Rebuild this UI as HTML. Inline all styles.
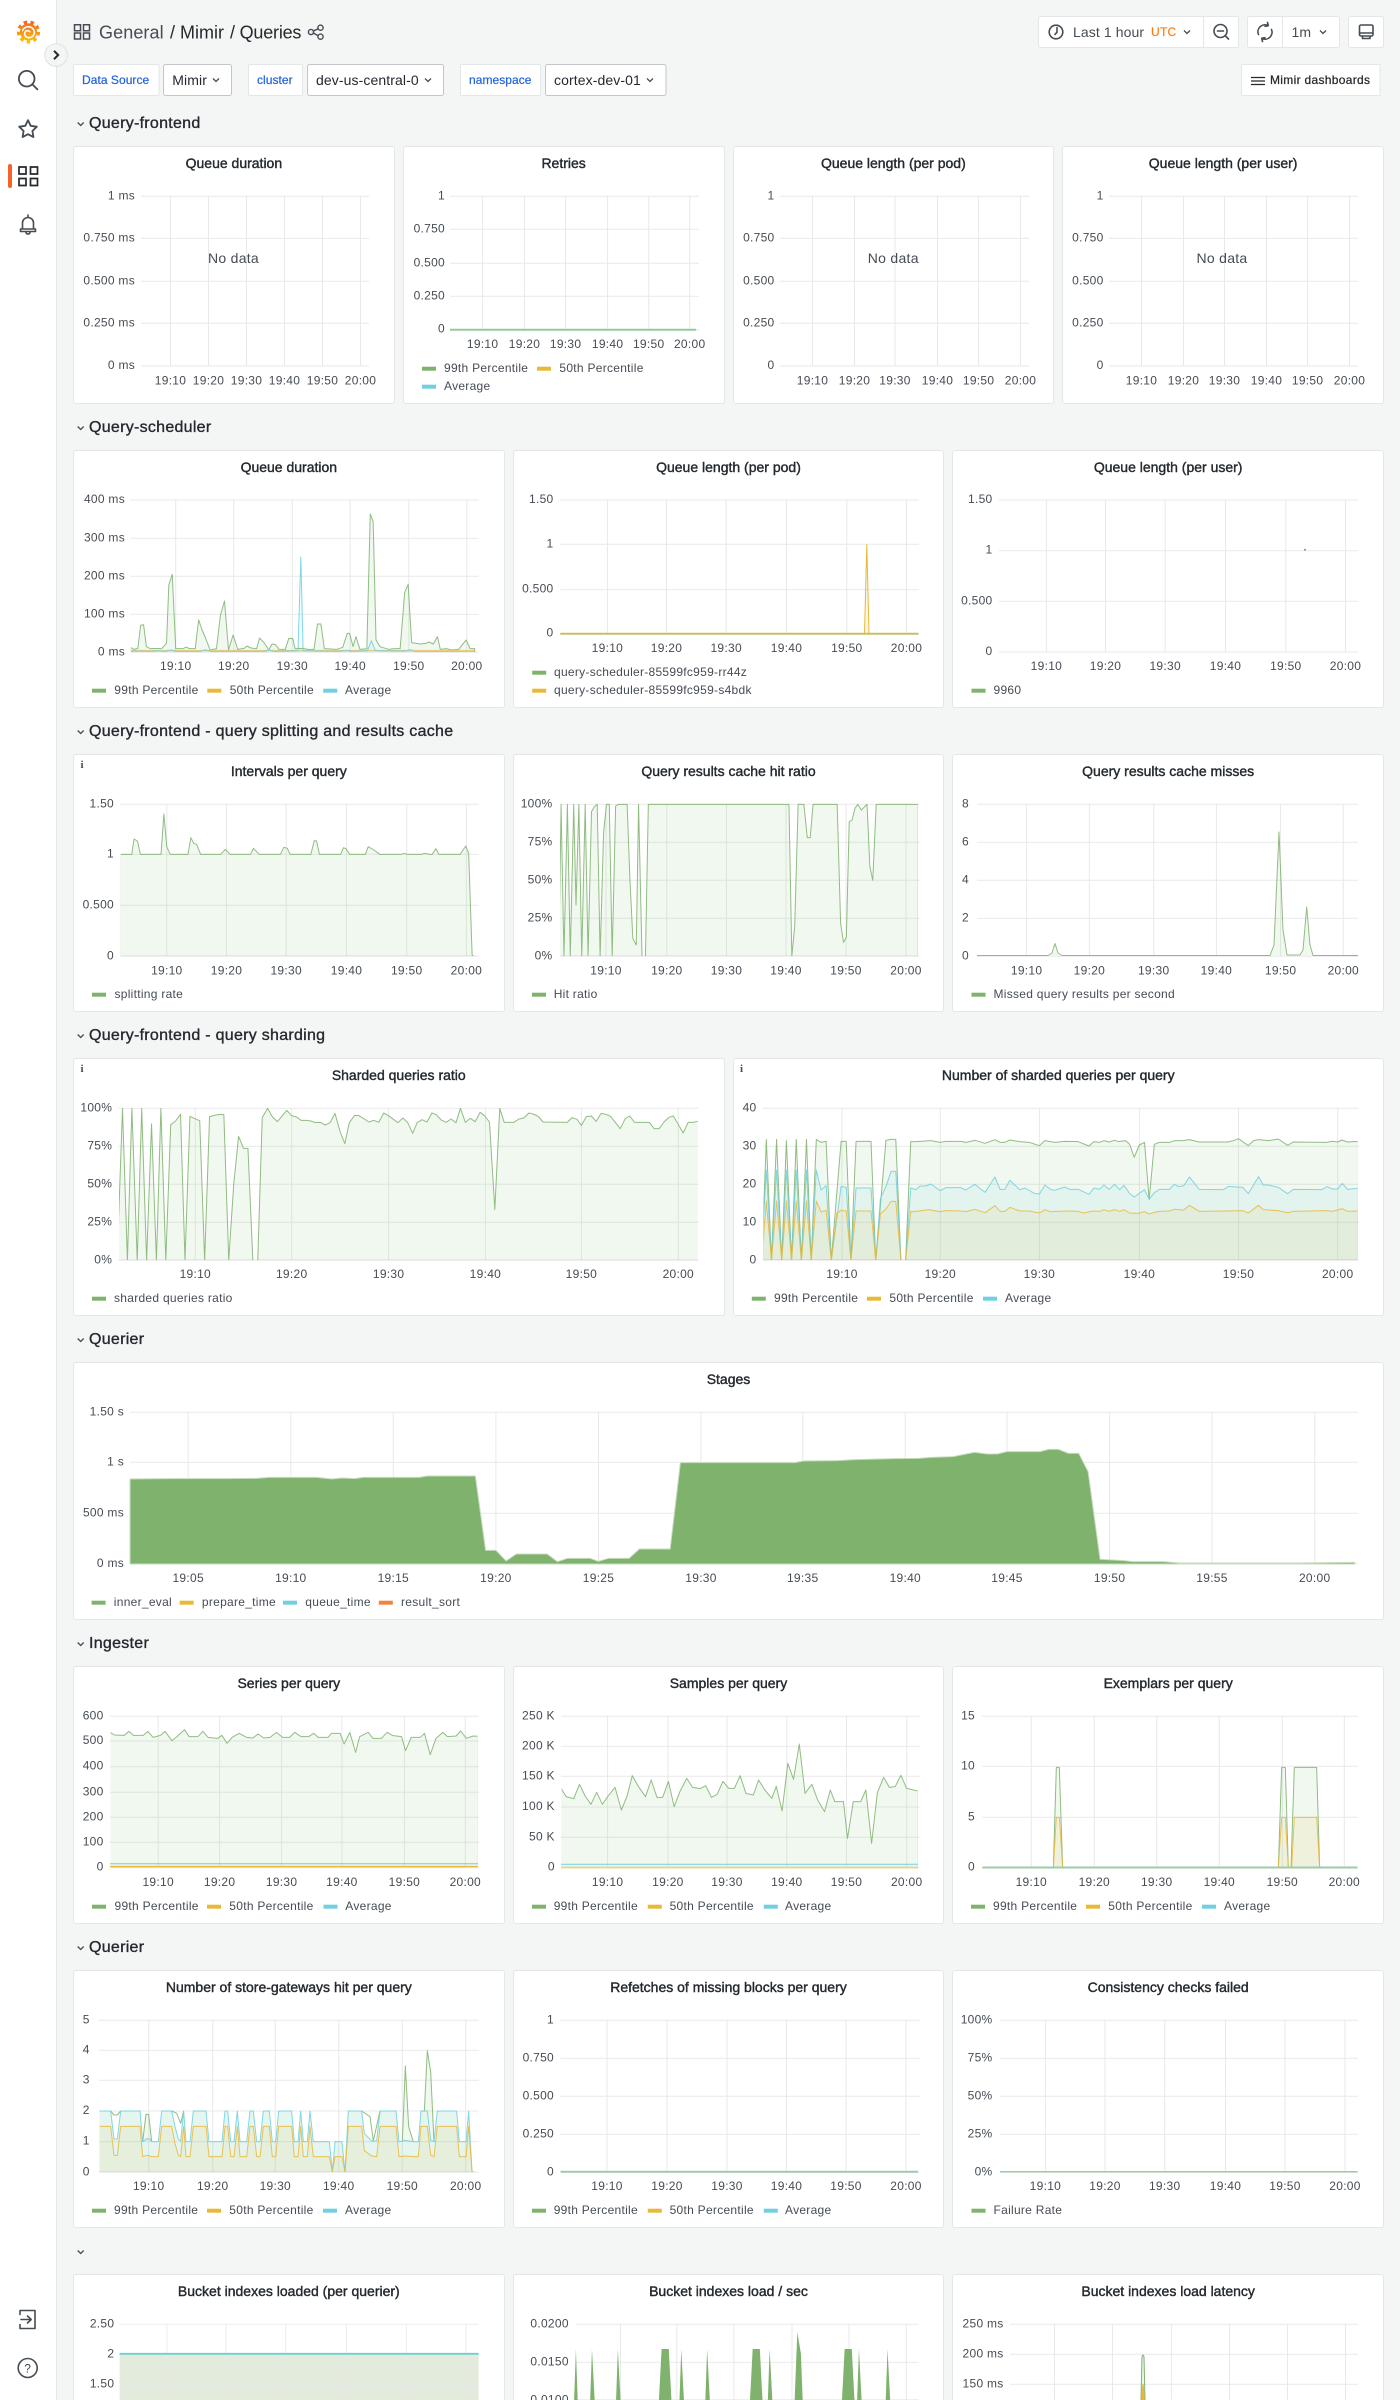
<!DOCTYPE html>
<html lang="en"><head><meta charset="utf-8"><title>Mimir / Queries</title>
<style>
html,body{margin:0;padding:0;background:#f4f5f5;width:1400px;height:2400px;overflow:hidden}
#root{position:absolute;left:0;top:0;width:1400px;height:2400px;overflow:hidden;font-family:"Liberation Sans",sans-serif;color:#24292e}
#side{position:absolute;left:0;top:0;box-sizing:border-box;width:57px;height:2400px;background:#fff;border-right:1px solid #e4e7e7}
.p{position:absolute;box-sizing:border-box;height:258px;background:#fff;border:1px solid #e4e7e7;border-radius:3px}
.p.cut{height:126px;border-bottom:0;border-radius:3px 3px 0 0}
.p h3{margin:0;font:400 14px/32px "Liberation Sans",sans-serif;-webkit-text-stroke:.4px #24292e;color:#24292e;text-align:center}
.w4{width:321.75px}.w3{width:431.67px}.w2{width:651.5px}.w1{width:1311px}
svg#o{position:absolute;left:0;top:0;width:1400px;height:2400px;display:block}
svg text{font-family:"Liberation Sans",sans-serif;font-size:12px;fill:#464c54;letter-spacing:.28px}
.ya text{text-anchor:end}.xa text{text-anchor:middle}
.lg text{fill:#464c54}
.g{stroke:#e8e9e9;stroke-width:1;fill:none}
.sec{font-size:16px!important;fill:#24292e!important;stroke:#24292e;stroke-width:.35px;letter-spacing:.28px!important}
.chev{fill:none;stroke:#464c54;stroke-width:1.3}
.gf,.yf,.cf,.gl,.yl,.cl{vector-effect:non-scaling-stroke;stroke-width:1;stroke-linejoin:round;stroke-opacity:.85}
.gf{fill:#73bf69;fill-opacity:.1;stroke:#7eb26d}
.yf{fill:#eab839;fill-opacity:.1;stroke:#eab839}
.cf{fill:#6ed0e0;fill-opacity:.1;stroke:#6ed0e0}
.gl{fill:none;stroke:#7eb26d}.yl{fill:none;stroke:#eab839}.cl{fill:none;stroke:#6ed0e0}
.ic{fill:none;stroke:#464c54;stroke-width:1.6;stroke-linecap:round;stroke-linejoin:round}
.bx{fill:#fff;stroke:#e4e7e7}.dd{fill:#fff;stroke:#c2c6ca}
.v{font-size:14px!important;fill:#24292e!important;letter-spacing:.1px!important}
.bl{fill:#1f62e0!important;stroke:#1f62e0;stroke-width:.2px;letter-spacing:.05px!important}
.nd{font-size:14px!important;text-anchor:middle;fill:#464c54}
.inf{font-family:"Liberation Serif",serif!important;font-weight:700;font-size:11px!important}
</style></head><body>
<div id="root">
<div id="side"></div>
<div class="p w4" style="left:73px;top:146px"><h3>Queue duration</h3></div>
<div class="p w4" style="left:402.75px;top:146px"><h3>Retries</h3></div>
<div class="p w4" style="left:732.5px;top:146px"><h3>Queue length (per pod)</h3></div>
<div class="p w4" style="left:1062.25px;top:146px"><h3>Queue length (per user)</h3></div>
<div class="p w3" style="left:73px;top:450px"><h3>Queue duration</h3></div>
<div class="p w3" style="left:512.67px;top:450px"><h3>Queue length (per pod)</h3></div>
<div class="p w3" style="left:952.33px;top:450px"><h3>Queue length (per user)</h3></div>
<div class="p w3" style="left:73px;top:754px"><h3>Intervals per query</h3></div>
<div class="p w3" style="left:512.67px;top:754px"><h3>Query results cache hit ratio</h3></div>
<div class="p w3" style="left:952.33px;top:754px"><h3>Query results cache misses</h3></div>
<div class="p w2" style="left:73px;top:1058px"><h3>Sharded queries ratio</h3></div>
<div class="p w2" style="left:732.5px;top:1058px"><h3>Number of sharded queries per query</h3></div>
<div class="p w1" style="left:73px;top:1362px"><h3>Stages</h3></div>
<div class="p w3" style="left:73px;top:1666px"><h3>Series per query</h3></div>
<div class="p w3" style="left:512.67px;top:1666px"><h3>Samples per query</h3></div>
<div class="p w3" style="left:952.33px;top:1666px"><h3>Exemplars per query</h3></div>
<div class="p w3" style="left:73px;top:1970px"><h3>Number of store-gateways hit per query</h3></div>
<div class="p w3" style="left:512.67px;top:1970px"><h3>Refetches of missing blocks per query</h3></div>
<div class="p w3" style="left:952.33px;top:1970px"><h3>Consistency checks failed</h3></div>
<div class="p w3 cut" style="left:73px;top:2274px"><h3>Bucket indexes loaded (per querier)</h3></div>
<div class="p w3 cut" style="left:512.67px;top:2274px"><h3>Bucket indexes load / sec</h3></div>
<div class="p w3 cut" style="left:952.33px;top:2274px"><h3>Bucket indexes load latency</h3></div>

<svg id="o" viewBox="0 0 1400 2400" xmlns="http://www.w3.org/2000/svg">
<defs>
<linearGradient id="lg" gradientUnits="userSpaceOnUse" x1="28" y1="19" x2="28" y2="44"><stop offset="0" stop-color="#f05a28"/><stop offset="1" stop-color="#fbca0a"/></linearGradient>
<clipPath id="c1"><rect x="130.9" y="480" width="347.5" height="171.9"/></clipPath>
<clipPath id="c2"><rect x="120.8" y="790" width="358" height="166"/></clipPath>
<clipPath id="c3"><rect x="560" y="790" width="357.8" height="166"/></clipPath>
<clipPath id="c5"><rect x="119" y="1100" width="578.5" height="160"/></clipPath>
<clipPath id="c6"><rect x="763.4" y="1100" width="594.2" height="160"/></clipPath>
<clipPath id="c8"><rect x="110.5" y="1700" width="367" height="167.3"/></clipPath>
<clipPath id="c9"><rect x="561.7" y="1700" width="356" height="167.3"/></clipPath>
<clipPath id="c11"><rect x="99.5" y="2015" width="375" height="157"/></clipPath>
</defs>

<!-- sidebar icons -->
<circle cx="28.5" cy="32" r="9.8" fill="none" stroke="url(#lg)" stroke-width="3.6" stroke-dasharray="3.42 3.42"/>
<circle cx="28.5" cy="32" r="8.6" fill="url(#lg)"/>
<path d="M22.6 30.5a6.2 6.2 0 0 1 11.8 1.2a5.6 5.6 0 0 1-6 6a3.9 3.9 0 0 1-3.6-5a2.9 2.9 0 0 1 5-1" fill="none" stroke="#fff" stroke-width="1.6" stroke-linecap="round"/>
<circle cx="26.7" cy="78.7" r="7.8" class="ic" style="stroke-width:1.8"/><path d="M32.4 84.4L37.4 89.4" class="ic" style="stroke-width:1.8"/>
<path d="M28 120.2l2.7 5.6 6.1.9-4.4 4.3 1 6.1-5.4-2.9-5.4 2.9 1-6.1-4.4-4.3 6.1-.9z" class="ic" style="stroke-width:1.8"/>
<rect x="8" y="164" width="4" height="24" rx="2" fill="#f4632c"/>
<path d="M19 167h7v7h-7zM30.500 167h7v7h-7zM19 178.500h7v7h-7zM30.500 178.500h7v7h-7z" fill="none" stroke="#24292e" stroke-width="1.7"/>
<path d="M28 215v2M22.500 229v-6a5.500 5.500 0 0 1 11 0v6M20.500 229h15v2.500h-15zM26 232.500a2 1.500 0 0 0 4 0" class="ic"/>
<path d="M24 2310.500h11v18h-11M20 2310.500v4M20 2324.500v4M20 2310.500h4M20 2328.500h4M21 2319.500h10M27.500 2316l3.700 3.500-3.700 3.500" class="ic"/>
<circle cx="27.700" cy="2368" r="9.500" class="ic"/><text x="27.700" y="2372.500" text-anchor="middle" style="font-size:12px">?</text>
<circle cx="56" cy="55" r="11.300" fill="#f4f5f5" stroke="#dfe2e2"/>
<path d="M54 50.800l4.200 4.200-4.200 4.200" fill="none" stroke="#24292e" stroke-width="2"/>

<!-- top bar -->
<path d="M74.500 24.800h6v6h-6zM83.500 24.800h6v6h-6zM74.500 33h6v6h-6zM83.500 33h6v6h-6z" fill="none" stroke="#464c54" stroke-width="1.500"/>
<text x="99" y="38.500" style="font-size:18px;letter-spacing:.1px;fill:#464c54">General</text>
<text x="170" y="38.500" style="font-size:18px;letter-spacing:0;fill:#24292e">/ Mimir</text>
<text x="230" y="38.500" style="font-size:18px;letter-spacing:-.2px;fill:#24292e">/ Queries</text>
<circle cx="311" cy="32" r="2.600" class="ic" style="stroke-width:1.400"/><circle cx="320.500" cy="27.700" r="2.600" class="ic" style="stroke-width:1.400"/><circle cx="320.500" cy="36.700" r="2.600" class="ic" style="stroke-width:1.400"/><path d="M313.300 31l4.900-2.200M313.300 33l4.900 2.700" class="ic" style="stroke-width:1.400"/>

<rect class="bx" x="1038.500" y="16.500" width="200" height="31" rx="2"/><path d="M1203.500 17v30" stroke="#e4e7e7"/>
<circle cx="1056" cy="32" r="6.800" class="ic"/><path d="M1057 27.500v4.700l-2 2.200" class="ic"/>
<text x="1073" y="37" style="font-size:14px;letter-spacing:.1px">Last 1 hour</text>
<text x="1151" y="36" style="fill:#ff780a;stroke:#ff780a;stroke-width:.15px">UTC</text>
<path d="M1184 30.500l3 3 3-3" class="chev"/>
<circle cx="1220.500" cy="31" r="6.500" class="ic"/><path d="M1217.500 31h6M1225.500 36l3 3" class="ic"/>
<rect class="bx" x="1247.500" y="16.500" width="92" height="31" rx="2"/><path d="M1282.500 17v30" stroke="#e4e7e7"/>
<path d="M1258.500 34.500a7 7 0 0 1 9.500-9M1271.500 29.500a7 7 0 0 1-9.500 9M1267.500 22.500l.8 3.200-3.200.6M1262.500 41.500l-.8-3.200 3.200-.6" class="ic"/>
<text x="1291.500" y="37" style="font-size:14px;letter-spacing:.1px">1m</text>
<path d="M1320 30.500l3 3 3-3" class="chev"/>
<rect class="bx" x="1348.500" y="16.500" width="35" height="31" rx="2"/>
<path d="M1361 25h10.500a1.500 1.500 0 0 1 1.500 1.500v8a1.500 1.500 0 0 1-1.500 1.500h-10.500a1.500 1.500 0 0 1-1.500-1.500v-8a1.500 1.500 0 0 1 1.500-1.500zM1359.500 33h13.500M1362.500 36v2.500h7.500v-2.500" class="ic"/>

<rect class="bx" x="73.500" y="64.500" width="85.500" height="31" rx="1"/><text class="bl" x="82" y="84">Data Source</text>
<rect class="dd" x="163.500" y="64.500" width="68" height="31" rx="2"/><text class="v" x="172.300" y="85">Mimir</text><path d="M213 78.500l3 3 3-3" class="chev"/>
<rect class="bx" x="248.500" y="64.500" width="54" height="31" rx="1"/><text class="bl" x="257" y="84">cluster</text>
<rect class="dd" x="307.500" y="64.500" width="136" height="31" rx="2"/><text class="v" x="316" y="85">dev-us-central-0</text><path d="M425 78.500l3 3 3-3" class="chev"/>
<rect class="bx" x="460.500" y="64.500" width="80" height="31" rx="1"/><text class="bl" x="469" y="84">namespace</text>
<rect class="dd" x="545.500" y="64.500" width="120.500" height="31" rx="2"/><text class="v" x="554" y="85">cortex-dev-01</text><path d="M647 78.500l3 3 3-3" class="chev"/>
<rect class="bx" x="1241.500" y="64.500" width="138.500" height="31" rx="1"/>
<path d="M1251 77.500h14M1251 81h14M1251 84.500h14" stroke="#24292e" stroke-width="1.300"/>
<text x="1270" y="84" style="fill:#24292e;stroke:#24292e;stroke-width:.25px;letter-spacing:.31px">Mimir dashboards</text>

<!-- section rows -->
<path class="chev" d="M77.700 122.500l3 3 3-3M77.700 426.500l3 3 3-3M77.700 730.500l3 3 3-3M77.700 1034.500l3 3 3-3M77.700 1338.500l3 3 3-3M77.700 1642.500l3 3 3-3M77.700 1946.500l3 3 3-3M77.700 2250.500l3 3 3-3"/>
<text class="sec" x="89" y="128">Query-frontend</text>
<text class="sec" x="89" y="432">Query-scheduler</text>
<text class="sec" x="89" y="736">Query-frontend - query splitting and results cache</text>
<text class="sec" x="89" y="1040">Query-frontend - query sharding</text>
<text class="sec" x="89" y="1344">Querier</text>
<text class="sec" x="89" y="1648">Ingester</text>
<text class="sec" x="89" y="1952">Querier</text>

<text class="inf" x="80.500" y="768">i</text><text class="inf" x="80.500" y="1072">i</text><text class="inf" x="740" y="1072">i</text>

<!-- R1 P1 -->
<path class="g" d="M141 196.300H369M141 238.300H369M141 281.300H369M141 323.300H369M141 366H369M170.500 196V366M208.500 196V366M246.500 196V366M284.500 196V366M322.500 196V366M360.500 196V366"/>
<g class="ya"><text x="135" y="199.300">1 ms</text><text x="135" y="241.300">0.750 ms</text><text x="135" y="284.300">0.500 ms</text><text x="135" y="326.300">0.250 ms</text><text x="135" y="369">0 ms</text></g>
<g class="xa"><text x="170.500" y="384.300">19:10</text><text x="208.500" y="384.300">19:20</text><text x="246.500" y="384.300">19:30</text><text x="284.500" y="384.300">19:40</text><text x="322.500" y="384.300">19:50</text><text x="360.500" y="384.300">20:00</text></g>
<text class="nd" x="233.500" y="263">No data</text>
<!-- R1 P2 -->
<path class="g" d="M450 196.300H699M450 229.300H699M450 263.300H699M450 296.300H699M450 329.700H699M482.600 196V330M524.500 196V330M565.600 196V330M607.600 196V330M648.700 196V330M689.700 196V330"/>
<path d="M450 329.700H696" stroke="#96c8a0" stroke-width="2"/>
<g class="ya"><text x="445" y="199.300">1</text><text x="445" y="232.300">0.750</text><text x="445" y="266.300">0.500</text><text x="445" y="299.300">0.250</text><text x="445" y="332.700">0</text></g>
<g class="xa"><text x="482.600" y="348">19:10</text><text x="524.500" y="348">19:20</text><text x="565.600" y="348">19:30</text><text x="607.600" y="348">19:40</text><text x="648.700" y="348">19:50</text><text x="689.700" y="348">20:00</text></g>
<g class="lg"><rect x="422" y="366.700" width="14" height="4" fill="#7eb26d"/><text x="444" y="372">99th Percentile</text><rect x="537" y="366.700" width="14" height="4" fill="#eab839"/><text x="559.400" y="372">50th Percentile</text><rect x="422" y="384.700" width="14" height="4" fill="#6ed0e0"/><text x="444" y="390">Average</text></g>
<!-- R1 P3 -->
<path class="g" d="M779.500 196.300H1029M779.500 238.300H1029M779.500 281.300H1029M779.500 323.300H1029M779.500 366H1029M812.500 196V366M854.500 196V366M895 196V366M937.500 196V366M978.600 196V366M1020.500 196V366"/>
<g class="ya"><text x="774.500" y="199.300">1</text><text x="774.500" y="241.300">0.750</text><text x="774.500" y="284.300">0.500</text><text x="774.500" y="326.300">0.250</text><text x="774.500" y="369">0</text></g>
<g class="xa"><text x="812.500" y="384.300">19:10</text><text x="854.500" y="384.300">19:20</text><text x="895" y="384.300">19:30</text><text x="937.500" y="384.300">19:40</text><text x="978.600" y="384.300">19:50</text><text x="1020.500" y="384.300">20:00</text></g>
<text class="nd" x="893.300" y="263">No data</text>
<!-- R1 P4 -->
<path class="g" d="M1109 196.300H1358M1109 238.300H1358M1109 281.300H1358M1109 323.300H1358M1109 366H1358M1141.500 196V366M1183.500 196V366M1224.500 196V366M1266.500 196V366M1307.600 196V366M1349.500 196V366"/>
<g class="ya"><text x="1103.600" y="199.300">1</text><text x="1103.600" y="241.300">0.750</text><text x="1103.600" y="284.300">0.500</text><text x="1103.600" y="326.300">0.250</text><text x="1103.600" y="369">0</text></g>
<g class="xa"><text x="1141.500" y="384.300">19:10</text><text x="1183.500" y="384.300">19:20</text><text x="1224.500" y="384.300">19:30</text><text x="1266.500" y="384.300">19:40</text><text x="1307.600" y="384.300">19:50</text><text x="1349.500" y="384.300">20:00</text></g>
<text class="nd" x="1222" y="263">No data</text>

<!-- R2 P1 -->
<path class="g" d="M130.400 500H478.800M130.400 538.300H478.800M130.400 576.300H478.800M130.400 614.300H478.800M130.400 652.300H478.800M175.700 500V652M233.700 500V652M292.300 500V652M350.200 500V652M408.800 500V652M466.800 500V652"/>
<g clip-path="url(#c1)"><g transform="translate(50,420) scale(.57398,.33333)">
<path class="gf" d="M140 697 140 682 146 688 153 685 158 616 163 614 168 680 175 686 195 685 203 670 207 495 213 463 219 686 232 686 237 681 243 686 253 686 259 600 265 630 270 650 279 690 290 686 297 585 304 543 311 690 319 645 327 688 338 685 343 678 350 684 360 686 365 654 373 668 381 690 387 672 393 674 399 688 410 688 416 655 423 656 427 686 440 685 450 688 460 688 466 612 472 612 478 686 500 688 510 682 518 640 522 640 528 680 533 650 540 688 552 686 558 282 563 305 568 660 575 680 590 688 600 686 610 686 618 517 624 493 630 668 645 672 655 670 660 666 668 672 675 650 680 688 690 686 700 690 712 688 725 660 732 686 740 686 740 697z"/>
<path class="yl" d="M140 691H740" style="stroke-opacity:.7"/>
<path class="cf" d="M140 697 140 693 175 694 190 692 200 694 210 690 220 694 262 694 270 689 280 694 375 694 382 690 390 694 432 692 437 411 441 692 500 694 518 691 525 694 553 692 560 662 567 692 620 693 628 689 635 694 740 695 740 697z"/>
</g></g>
<g class="ya"><text x="125" y="503">400 ms</text><text x="125" y="541.300">300 ms</text><text x="125" y="579.300">200 ms</text><text x="125" y="617.300">100 ms</text><text x="125" y="655.300">0 ms</text></g>
<g class="xa"><text x="175.700" y="670">19:10</text><text x="233.700" y="670">19:20</text><text x="292.300" y="670">19:30</text><text x="350.200" y="670">19:40</text><text x="408.800" y="670">19:50</text><text x="466.800" y="670">20:00</text></g>
<g class="lg"><rect x="92" y="688.700" width="14" height="4" fill="#7eb26d"/><text x="114.300" y="694">99th Percentile</text><rect x="207.300" y="688.700" width="14" height="4" fill="#eab839"/><text x="229.700" y="694">50th Percentile</text><rect x="323.200" y="688.700" width="14" height="4" fill="#6ed0e0"/><text x="345" y="694">Average</text></g>
<!-- R2 P2 -->
<path class="g" d="M560.300 500H919M560.300 544.300H919M560.300 589.700H919M560.300 633.700H919M607.400 500V634M666.500 500V634M726.200 500V634M786.500 500V634M846.800 500V634M906.500 500V634"/>
<path d="M864.500 633.700L866.800 544.300 869 633.700" fill="#eab839" fill-opacity=".12" stroke="#eab839" stroke-width="1"/>
<path d="M560.300 633.700H918.500" stroke="#c9bd6a" stroke-width="2"/>
<g class="ya"><text x="553.500" y="503">1.50</text><text x="553.500" y="547.300">1</text><text x="553.500" y="592.700">0.500</text><text x="553.500" y="636.700">0</text></g>
<g class="xa"><text x="607.400" y="652">19:10</text><text x="666.500" y="652">19:20</text><text x="726.200" y="652">19:30</text><text x="786.500" y="652">19:40</text><text x="846.800" y="652">19:50</text><text x="906.500" y="652">20:00</text></g>
<g class="lg"><rect x="532.200" y="670.700" width="14" height="4" fill="#7eb26d"/><text x="554" y="676">query-scheduler-85599fc959-rr44z</text><rect x="532.200" y="688.700" width="14" height="4" fill="#eab839"/><text x="554" y="694">query-scheduler-85599fc959-s4bdk</text></g>
<!-- R2 P3 -->
<path class="g" d="M999 500H1358M999 550.700H1358M999 601.300H1358M999 652H1358M1046.400 500V652M1105.500 500V652M1165.200 500V652M1225.500 500V652M1285.800 500V652M1345.500 500V652"/>
<circle cx="1305" cy="549.700" r="1" fill="#8f7ba8"/>
<g class="ya"><text x="992.500" y="503">1.50</text><text x="992.500" y="553.700">1</text><text x="992.500" y="604.300">0.500</text><text x="992.500" y="655">0</text></g>
<g class="xa"><text x="1046.400" y="670">19:10</text><text x="1105.500" y="670">19:20</text><text x="1165.200" y="670">19:30</text><text x="1225.500" y="670">19:40</text><text x="1285.800" y="670">19:50</text><text x="1345.500" y="670">20:00</text></g>
<g class="lg"><rect x="971.500" y="688.700" width="14" height="4" fill="#7eb26d"/><text x="993.500" y="694">9960</text></g>

<!-- R3 P1 -->
<path class="g" d="M120.300 804.300H479M120.300 854.300H479M120.300 905.300H479M120.300 956.300H479M166.800 804V956M226.500 804V956M286.200 804V956M346.500 804V956M406.700 804V956M466.400 804V956"/>
<g clip-path="url(#c2)"><g transform="translate(60,740) scale(.57398,.33333)">
<path class="gf" d="M105 649 105 343 125 343 129 297 135 303 140 343 176 343 181 222 186 320 192 343 223 343 228 293 233 310 238 313 245 343 280 343 288 328 296 343 332 343 337 325 347 343 384 343 390 322 396 325 401 343 437 343 443 302 447 303 452 343 489 343 494 323 498 326 505 343 532 343 537 320 547 330 557 343 595 343 600 340 605 343 630 343 635 340 648 344 655 326 660 343 697 343 707 318 712 340 718 645 721 649 725 649z"/>
</g></g>
<g class="ya"><text x="114" y="807.300">1.50</text><text x="114" y="857.300">1</text><text x="114" y="908.300">0.500</text><text x="114" y="959.300">0</text></g>
<g class="xa"><text x="166.800" y="974.300">19:10</text><text x="226.500" y="974.300">19:20</text><text x="286.200" y="974.300">19:30</text><text x="346.500" y="974.300">19:40</text><text x="406.700" y="974.300">19:50</text><text x="466.400" y="974.300">20:00</text></g>
<g class="lg"><rect x="92" y="992.700" width="14" height="4" fill="#7eb26d"/><text x="114.500" y="998">splitting rate</text></g>
<!-- R3 P2 -->
<path class="g" d="M560.600 804.300H919.400M560.600 842.300H919.400M560.600 880.300H919.400M560.600 918.300H919.400M560.600 956.300H919.400M606 804V956M666.800 804V956M726.500 804V956M786 804V956M846 804V956M906 804V956"/>
<g clip-path="url(#c3)"><g transform="translate(60,740) scale(.57398,.33333)">
<path class="gf" d="M870 649 870 535 873 193 878 649 884 193 889 649 895 193 899 495 904 193 909 649 915 193 920 649 926 215 931 200 936 193 941 649 947 280 952 193 957 193 962 649 968 198 973 193 988 193 993 420 998 595 1004 615 1008 193 1014 649 1020 649 1025 193 1270 193 1275 649 1280 560 1286 193 1296 193 1302 293 1307 293 1312 193 1354 193 1360 550 1365 607 1370 592 1375 245 1380 240 1385 205 1390 193 1396 210 1406 193 1411 380 1416 421 1422 193 1495 193 1495 649z"/>
</g></g>
<g class="ya"><text x="552.500" y="807.300">100%</text><text x="552.500" y="845.300">75%</text><text x="552.500" y="883.300">50%</text><text x="552.500" y="921.300">25%</text><text x="552.500" y="959.300">0%</text></g>
<g class="xa"><text x="606" y="974.300">19:10</text><text x="666.800" y="974.300">19:20</text><text x="726.500" y="974.300">19:30</text><text x="786" y="974.300">19:40</text><text x="846" y="974.300">19:50</text><text x="906" y="974.300">20:00</text></g>
<g class="lg"><rect x="532" y="992.700" width="14" height="4" fill="#7eb26d"/><text x="553.700" y="998">Hit ratio</text></g>
<!-- R3 P3 -->
<path class="g" d="M977 804.300H1358M977 842.300H1358M977 880.300H1358M977 918.300H1358M977 956.300H1358M1026.600 804V956M1089.400 804V956M1153.700 804V956M1216.400 804V956M1280.600 804V956M1343.300 804V956"/>
<path class="gf" d="M977 955.500H1048L1052 953 1055 943.500 1058 953 1062 955.500H1270L1274 945 1279 832 1283 930 1287 955 1300 955 1303 950 1306.700 907 1310 945 1313 955.500H1358"/>
<g class="ya"><text x="969" y="807.300">8</text><text x="969" y="845.300">6</text><text x="969" y="883.300">4</text><text x="969" y="921.300">2</text><text x="969" y="959.300">0</text></g>
<g class="xa"><text x="1026.600" y="974.300">19:10</text><text x="1089.400" y="974.300">19:20</text><text x="1153.700" y="974.300">19:30</text><text x="1216.400" y="974.300">19:40</text><text x="1280.600" y="974.300">19:50</text><text x="1343.300" y="974.300">20:00</text></g>
<g class="lg"><rect x="971.500" y="992.700" width="14" height="4" fill="#7eb26d"/><text x="993.500" y="998">Missed query results per second</text></g>

<!-- R4 P1 -->
<path class="g" d="M118.500 1108.300H698.800M118.500 1146.300H698.800M118.500 1184.300H698.800M118.500 1222.300H698.800M118.500 1260.300H698.800M195.300 1108V1260M291.700 1108V1260M388.600 1108V1260M485.400 1108V1260M581.400 1108V1260M678.300 1108V1260"/>
<g clip-path="url(#c5)"><g transform="translate(60,1050) scale(.44643,.33333)">
<path class="gf" d="M131 631 131 517 140 175 151 631 161 175 173 631 183 175 194 631 205 222 216 631 226 175 237 631 248 224 259 213 270 193 280 631 291 199 302 206 313 212 324 631 335 200 350 195 357 193 367 194 378 631 389 405 400 259 411 295 421 295 432 631 443 631 453 203 465 175 476 201 487 215 508 181 519 197 530 201 540 211 551 211 562 213 572 218 583 217 594 225 605 218 616 190 627 243 638 281 648 218 660 196 670 197 692 216 703 211 714 217 725 189 736 197 757 218 768 204 779 218 790 250 800 218 811 209 822 216 833 189 843 194 854 210 865 217 876 207 887 218 897 175 908 217 919 205 930 215 941 187 951 197 962 216 974 478 985 175 995 217 1017 217 1028 207 1039 204 1050 189 1060 192 1071 199 1082 216 1136 217 1147 203 1158 208 1168 226 1179 200 1190 198 1201 214 1212 190 1223 193 1233 199 1255 236 1266 206 1276 198 1287 217 1320 217 1331 236 1342 236 1353 216 1364 202 1374 198 1396 249 1407 217 1418 217 1429 214 1429 631z"/>
</g></g>
<g class="ya"><text x="112.200" y="1111.300">100%</text><text x="112.200" y="1149.300">75%</text><text x="112.200" y="1187.300">50%</text><text x="112.200" y="1225.300">25%</text><text x="112.200" y="1263.300">0%</text></g>
<g class="xa"><text x="195.300" y="1278">19:10</text><text x="291.700" y="1278">19:20</text><text x="388.600" y="1278">19:30</text><text x="485.400" y="1278">19:40</text><text x="581.400" y="1278">19:50</text><text x="678.300" y="1278">20:00</text></g>
<g class="lg"><rect x="92" y="1296.700" width="14" height="4" fill="#7eb26d"/><text x="114" y="1302">sharded queries ratio</text></g>
<!-- R4 P2 -->
<path class="g" d="M762.900 1108.300H1359M762.900 1146.300H1359M762.900 1184.300H1359M762.900 1222.300H1359M762.900 1260.300H1359M842 1108V1260M940.300 1108V1260M1039.400 1108V1260M1139.400 1108V1260M1238.500 1108V1260M1337.700 1108V1260"/>
<g clip-path="url(#c6)"><g transform="translate(730,1050) scale(.4273,.33333)">
<path class="gf" d="M77 631 77 540 85 268 97 631 109 268 121 631 132 272 144 631 155 268 167 631 179 268 190 631 202 268 213 277 225 274 237 631 260 274 272 274 283 631 295 274 330 274 341 631 365 271 377 268 388 268 400 631 411 631 423 275 435 275 470 272 492 277 505 274 540 274 552 277 573 271 597 280 620 269 632 277 643 277 655 270 678 275 700 277 724 287 737 272 760 277 783 274 815 275 840 288 852 275 865 277 875 272 887 276 900 271 910 275 925 272 935 282 946 322 958 285 970 277 981 448 993 283 1005 277 1030 277 1040 272 1060 272 1075 269 1098 276 1165 276 1178 272 1190 266 1213 287 1225 272 1237 269 1260 272 1283 267 1305 286 1318 276 1395 277 1410 274 1422 276 1432 270 1445 276 1470 274 1470 631z"/>
<path class="cf" d="M77 631 77 540 85 360 97 631 109 360 121 631 132 360 144 631 155 360 167 631 179 360 190 631 202 360 213 420 225 407 237 631 260 409 272 412 283 631 295 414 330 414 341 631 352 445 365 410 377 364 388 364 400 631 411 631 423 414 435 419 445 408 458 408 470 402 492 422 505 413 540 413 552 420 573 403 597 427 620 381 632 418 643 418 655 391 678 419 690 414 712 430 724 432 737 405 750 418 760 421 783 411 795 418 815 418 840 433 852 414 865 418 875 405 887 418 900 403 912 419 922 406 935 430 946 441 970 419 981 448 993 428 1005 418 1028 418 1040 403 1050 410 1062 407 1075 381 1098 418 1155 419 1167 409 1200 412 1213 431 1237 380 1248 405 1260 405 1283 412 1305 431 1318 418 1385 419 1397 410 1410 417 1422 417 1433 400 1445 418 1470 415 1470 631z"/>
<path class="yf" d="M77 631 77 585 85 453 97 631 109 453 121 631 132 453 144 631 155 453 167 631 179 453 190 631 202 453 213 486 225 481 237 631 250 490 260 481 272 483 283 631 295 483 330 483 341 631 352 492 365 477 377 454 388 454 400 631 411 631 423 484 435 484 465 479 490 485 505 482 540 483 552 485 573 478 597 488 620 467 632 484 643 484 655 472 678 483 700 483 724 489 737 479 750 485 790 483 815 484 828 489 850 483 865 484 875 479 887 484 900 479 912 484 922 479 935 489 955 490 970 485 981 492 993 487 1005 484 1028 483 1040 478 1062 480 1075 466 1098 484 1165 483 1200 482 1213 489 1237 466 1248 479 1283 482 1305 488 1318 484 1395 482 1410 484 1433 476 1445 484 1470 483 1470 631z"/>
</g></g>
<g class="ya"><text x="756.500" y="1111.300">40</text><text x="756.500" y="1149.300">30</text><text x="756.500" y="1187.300">20</text><text x="756.500" y="1225.300">10</text><text x="756.500" y="1263.300">0</text></g>
<g class="xa"><text x="842" y="1278">19:10</text><text x="940.300" y="1278">19:20</text><text x="1039.400" y="1278">19:30</text><text x="1139.400" y="1278">19:40</text><text x="1238.500" y="1278">19:50</text><text x="1337.700" y="1278">20:00</text></g>
<g class="lg"><rect x="751.800" y="1296.700" width="14" height="4" fill="#7eb26d"/><text x="774" y="1302">99th Percentile</text><rect x="867" y="1296.700" width="14" height="4" fill="#eab839"/><text x="889.400" y="1302">50th Percentile</text><rect x="983" y="1296.700" width="14" height="4" fill="#6ed0e0"/><text x="1005" y="1302">Average</text></g>

<!-- R5 Stages -->
<path class="g" d="M130 1412.300H1358M130 1462.300H1358M130 1513.300H1358M130 1564H1358M188.200 1412V1564M290.800 1412V1564M393.300 1412V1564M495.900 1412V1564M598.500 1412V1564M701 1412V1564M802.700 1412V1564M905.300 1412V1564M1007 1412V1564M1109.600 1412V1564M1212 1412V1564M1314.700 1412V1564"/>
<g transform="translate(60,1350) scale(.85459,.33333)"><path fill="#7eb26d" stroke="#c5dcbc" stroke-width="1" vector-effect="non-scaling-stroke" d="M82 642 82 387 130 386 190 386 230 385 245 382 300 382 318 387 330 384 345 386 355 382 420 382 430 378 486 378 498 601 510 601 522 633 534 612 570 612 582 635 594 625 620 625 630 634 642 625 666 625 678 597 714 597 726 338 820 338 860 338 870 333 910 332 930 329 975 326 1005 325 1020 322 1045 320 1070 307 1085 312 1097 312 1108 305 1147 305 1157 298 1168 298 1180 310 1192 310 1203 365 1217 628 1245 632 1255 635 1290 635 1310 639 1450 639 1515 637 1515 642z"/></g>
<g class="ya"><text x="124" y="1415.300">1.50 s</text><text x="124" y="1465.300">1 s</text><text x="124" y="1516.300">500 ms</text><text x="124" y="1567">0 ms</text></g>
<g class="xa"><text x="188.200" y="1582">19:05</text><text x="290.800" y="1582">19:10</text><text x="393.300" y="1582">19:15</text><text x="495.900" y="1582">19:20</text><text x="598.500" y="1582">19:25</text><text x="701" y="1582">19:30</text><text x="802.700" y="1582">19:35</text><text x="905.300" y="1582">19:40</text><text x="1007" y="1582">19:45</text><text x="1109.600" y="1582">19:50</text><text x="1212" y="1582">19:55</text><text x="1314.700" y="1582">20:00</text></g>
<g class="lg"><rect x="91.600" y="1600.700" width="14" height="4" fill="#7eb26d"/><text x="113.800" y="1606">inner_eval</text><rect x="179.700" y="1600.700" width="14" height="4" fill="#eab839"/><text x="201.900" y="1606">prepare_time</text><rect x="283" y="1600.700" width="14" height="4" fill="#6ed0e0"/><text x="305.300" y="1606">queue_time</text><rect x="378.800" y="1600.700" width="14" height="4" fill="#ef843c"/><text x="401" y="1606">result_sort</text></g>

<!-- R6 P1 -->
<path class="g" d="M110 1716.300H479M110 1741H479M110 1766.700H479M110 1792.300H479M110 1817.300H479M110 1842.300H479M110 1867.700H479M158.200 1716V1868M219.600 1716V1868M281.600 1716V1868M341.900 1716V1868M404.400 1716V1868M465.300 1716V1868"/>
<g clip-path="url(#c8)"><g transform="translate(60,1660) scale(.57398,.33333)">
<path class="gf" d="M87 623 87 217 95 225 112 226 120 214 128 226 145 226 153 214 162 232 175 226 183 214 195 242 205 228 217 209 225 230 240 230 249 214 258 232 275 235 282 226 291 250 300 232 312 220 325 232 336 234 345 222 355 234 366 232 377 217 388 232 400 232 409 217 420 230 433 230 442 220 450 232 467 232 473 220 488 220 495 252 505 217 515 277 522 230 537 217 545 235 560 235 570 217 580 227 595 230 602 272 612 232 628 232 635 220 645 284 655 235 667 217 675 230 690 228 698 213 708 235 720 228 728 229 728 623z"/>
</g></g>
<path d="M110 1863.700H478" stroke="#6ed0e0" stroke-width="1.300" stroke-opacity=".75"/>
<path d="M110 1866.500H478" stroke="#eab839" stroke-width="1.300"/>
<g class="ya"><text x="103.600" y="1719.300">600</text><text x="103.600" y="1744">500</text><text x="103.600" y="1769.700">400</text><text x="103.600" y="1795.300">300</text><text x="103.600" y="1820.300">200</text><text x="103.600" y="1845.300">100</text><text x="103.600" y="1870.700">0</text></g>
<g class="xa"><text x="158.200" y="1886">19:10</text><text x="219.600" y="1886">19:20</text><text x="281.600" y="1886">19:30</text><text x="341.900" y="1886">19:40</text><text x="404.400" y="1886">19:50</text><text x="465.300" y="1886">20:00</text></g>
<g class="lg"><rect x="92" y="1904.700" width="14" height="4" fill="#7eb26d"/><text x="114.500" y="1910">99th Percentile</text><rect x="207" y="1904.700" width="14" height="4" fill="#eab839"/><text x="229.300" y="1910">50th Percentile</text><rect x="323.500" y="1904.700" width="14" height="4" fill="#6ed0e0"/><text x="345.300" y="1910">Average</text></g>
<!-- R6 P2 -->
<path class="g" d="M561 1716.300H919.400M561 1746.300H919.400M561 1776.300H919.400M561 1807H919.400M561 1837.300H919.400M561 1867.700H919.400M607.600 1716V1868M667.900 1716V1868M727 1716V1868M786.800 1716V1868M846.500 1716V1868M906.700 1716V1868"/>
<g clip-path="url(#c9)"><g transform="translate(60,1660) scale(.57398,.33333)">
<path class="gf" d="M873 623 873 385 882 410 895 416 905 373 915 408 925 433 935 397 945 433 955 408 967 382 978 450 988 408 997 347 1008 380 1020 410 1030 360 1040 412 1050 412 1060 364 1070 440 1080 395 1092 355 1102 382 1115 386 1125 377 1135 412 1145 403 1155 364 1165 385 1175 385 1185 347 1195 400 1208 405 1217 360 1228 390 1240 415 1248 379 1258 453 1268 310 1278 358 1288 252 1298 400 1310 373 1320 420 1332 455 1342 390 1350 425 1365 425 1372 535 1382 425 1395 425 1404 390 1414 550 1424 398 1435 352 1445 382 1455 380 1465 346 1475 385 1495 393 1495 623z"/>
</g></g>
<path d="M561 1864.300H918" stroke="#6ed0e0" stroke-width="1.200" stroke-opacity=".85"/>
<path d="M561 1867.500H918" stroke="#e8d49a" stroke-width="2"/>
<g class="ya"><text x="554.800" y="1719.300">250 K</text><text x="554.800" y="1749.300">200 K</text><text x="554.800" y="1779.300">150 K</text><text x="554.800" y="1810">100 K</text><text x="554.800" y="1840.300">50 K</text><text x="554.800" y="1870.700">0</text></g>
<g class="xa"><text x="607.600" y="1886">19:10</text><text x="667.900" y="1886">19:20</text><text x="727" y="1886">19:30</text><text x="786.800" y="1886">19:40</text><text x="846.500" y="1886">19:50</text><text x="906.700" y="1886">20:00</text></g>
<g class="lg"><rect x="532" y="1904.700" width="14" height="4" fill="#7eb26d"/><text x="553.700" y="1910">99th Percentile</text><rect x="647.800" y="1904.700" width="14" height="4" fill="#eab839"/><text x="669.600" y="1910">50th Percentile</text><rect x="763.800" y="1904.700" width="14" height="4" fill="#6ed0e0"/><text x="785" y="1910">Average</text></g>
<!-- R6 P3 -->
<path class="g" d="M982.300 1716.300H1357.700M982.300 1766.300H1357.700M982.300 1817.300H1357.700M982.300 1867.700H1357.700M1031.300 1716V1868M1094.300 1716V1868M1156.700 1716V1868M1219.300 1716V1868M1282.300 1716V1868M1344.300 1716V1868"/>
<g transform="translate(930,1660) scale(.33333,.33333)">
<path class="gf" d="M370 623 379 322 388 322 398 623M1045 623 1055 322 1066 322 1075 623M1083 623 1093 322 1160 322 1169 623"/>
<path class="yf" d="M370 623 379 472 388 472 398 623M1045 623 1055 472 1066 472 1075 623M1085 623 1093 472 1160 472 1169 623"/>
</g>
<path d="M982.300 1867.500H1357.500" stroke="#9fcba9" stroke-width="2"/>
<g class="ya"><text x="975" y="1719.300">15</text><text x="975" y="1769.300">10</text><text x="975" y="1820.300">5</text><text x="975" y="1870.700">0</text></g>
<g class="xa"><text x="1031.300" y="1886">19:10</text><text x="1094.300" y="1886">19:20</text><text x="1156.700" y="1886">19:30</text><text x="1219.300" y="1886">19:40</text><text x="1282.300" y="1886">19:50</text><text x="1344.300" y="1886">20:00</text></g>
<g class="lg"><rect x="971" y="1904.700" width="14" height="4" fill="#7eb26d"/><text x="993" y="1910">99th Percentile</text><rect x="1086" y="1904.700" width="14" height="4" fill="#eab839"/><text x="1108.300" y="1910">50th Percentile</text><rect x="1202" y="1904.700" width="14" height="4" fill="#6ed0e0"/><text x="1224" y="1910">Average</text></g>

<!-- R7 P1 -->
<path class="g" d="M99 2020.300H479M99 2050.300H479M99 2080.300H479M99 2111H479M99 2141.700H479M99 2172.300H479M148.700 2020V2172M212.700 2020V2172M275.300 2020V2172M338.700 2020V2172M402.300 2020V2172M465.700 2020V2172"/>
<g clip-path="url(#c11)"><g transform="translate(60,1960) scale(.33333,.33333)">
<path class="gl" d="M152 453 162 465 172 465 182 453M248 545 258 463 266 463 275 545M335 453 350 460 362 490 371 453M905 453 930 470 940 543 960 453M1027 545 1036 318 1046 500 1060 545M1083 453 1093 453 1102 272 1112 335 1122 545"/>
<path fill="#73bf69" fill-opacity=".1" d="M1027 545 1036 318 1046 500 1060 545zM1093 453 1102 272 1112 335 1122 545 1112 541 1102 453zM248 545 258 463 266 463 275 545z"/>
<path class="cf" style="fill:#6fc7a9;fill-opacity:.18" d="M117 637 117 453 152 453 162 537 172 537 182 453 240 453 248 545 260 536 270 537 275 545 295 545 305 453 335 453 345 500 355 537 362 543 371 453 378 545 390 545 400 453 438 453 447 545 486 545 495 453 503 453 512 545 522 545 532 453 540 545 560 545 570 453 580 453 590 545 600 545 610 453 628 453 637 545 647 545 656 453 695 453 703 545 714 545 722 453 730 545 742 545 750 453 760 545 808 545 817 635 825 545 846 545 855 637 865 453 905 453 913 520 935 543 950 543 960 453 1008 453 1017 545 1035 541 1060 545 1075 545 1083 453 1102 453 1112 541 1122 545 1132 453 1190 453 1198 545 1218 545 1226 453 1236 635 1245 637z"/>
<path class="yf" d="M117 637 117 499 152 499 162 586 172 586 182 499 240 499 248 590 260 586 270 588 275 590 295 590 305 499 335 499 345 550 355 586 362 590 371 499 378 590 390 590 400 499 438 499 447 590 486 590 495 499 503 499 512 590 522 590 532 499 540 590 560 590 570 499 580 499 590 590 600 590 610 499 628 499 637 590 647 590 656 499 695 499 703 590 714 590 722 499 730 590 742 590 750 499 760 590 808 590 817 635 825 590 846 590 855 637 865 499 905 499 913 572 935 588 950 590 960 499 1008 499 1017 590 1035 588 1060 590 1075 590 1083 499 1102 499 1112 586 1122 590 1132 499 1190 499 1198 590 1218 590 1226 499 1236 635 1245 637z"/>
</g></g>
<g class="ya"><text x="89.700" y="2023.300">5</text><text x="89.700" y="2053.300">4</text><text x="89.700" y="2083.300">3</text><text x="89.700" y="2114">2</text><text x="89.700" y="2144.700">1</text><text x="89.700" y="2175.300">0</text></g>
<g class="xa"><text x="148.700" y="2190">19:10</text><text x="212.700" y="2190">19:20</text><text x="275.300" y="2190">19:30</text><text x="338.700" y="2190">19:40</text><text x="402.300" y="2190">19:50</text><text x="465.700" y="2190">20:00</text></g>
<g class="lg"><rect x="92" y="2208.700" width="14" height="4" fill="#7eb26d"/><text x="114" y="2214">99th Percentile</text><rect x="207" y="2208.700" width="14" height="4" fill="#eab839"/><text x="229.300" y="2214">50th Percentile</text><rect x="323" y="2208.700" width="14" height="4" fill="#6ed0e0"/><text x="345" y="2214">Average</text></g>
<!-- R7 P2 -->
<path class="g" d="M560.600 2020.300H919.400M560.600 2058.300H919.400M560.600 2096.300H919.400M560.600 2134.300H919.400M560.600 2172.300H919.400M607 2020V2172M667 2020V2172M727 2020V2172M786.500 2020V2172M846 2020V2172M906 2020V2172"/>
<path d="M560.600 2171.800H918" stroke="#9fcba9" stroke-width="2"/>
<g class="ya"><text x="554" y="2023.300">1</text><text x="554" y="2061.300">0.750</text><text x="554" y="2099.300">0.500</text><text x="554" y="2137.300">0.250</text><text x="554" y="2175.300">0</text></g>
<g class="xa"><text x="607" y="2190">19:10</text><text x="667" y="2190">19:20</text><text x="727" y="2190">19:30</text><text x="786.500" y="2190">19:40</text><text x="846" y="2190">19:50</text><text x="906" y="2190">20:00</text></g>
<g class="lg"><rect x="532" y="2208.700" width="14" height="4" fill="#7eb26d"/><text x="553.700" y="2214">99th Percentile</text><rect x="647.800" y="2208.700" width="14" height="4" fill="#eab839"/><text x="669.600" y="2214">50th Percentile</text><rect x="763.800" y="2208.700" width="14" height="4" fill="#6ed0e0"/><text x="785" y="2214">Average</text></g>
<!-- R7 P3 -->
<path class="g" d="M999.900 2020.300H1358M999.900 2058.300H1358M999.900 2096.300H1358M999.900 2134.300H1358M999.900 2172.300H1358M1045.400 2020V2172M1105 2020V2172M1164.700 2020V2172M1225.500 2020V2172M1285 2020V2172M1345 2020V2172"/>
<path d="M999.900 2171.800H1357.500" stroke="#9fcba9" stroke-width="1.500"/>
<g class="ya"><text x="992.500" y="2023.300">100%</text><text x="992.500" y="2061.300">75%</text><text x="992.500" y="2099.300">50%</text><text x="992.500" y="2137.300">25%</text><text x="992.500" y="2175.300">0%</text></g>
<g class="xa"><text x="1045.400" y="2190">19:10</text><text x="1105" y="2190">19:20</text><text x="1164.700" y="2190">19:30</text><text x="1225.500" y="2190">19:40</text><text x="1285" y="2190">19:50</text><text x="1345" y="2190">20:00</text></g>
<g class="lg"><rect x="971.500" y="2208.700" width="14" height="4" fill="#7eb26d"/><text x="993.500" y="2214">Failure Rate</text></g>

<!-- R8 P1 -->
<rect x="119.600" y="2354.300" width="359" height="45.700" fill="#e3ebdd"/>
<path class="g" d="M119.600 2324.300H478.600M119.600 2354.300H478.600M119.600 2384.300H478.600M167 2324V2400M225.900 2324V2400M285.700 2324V2400M346.400 2324V2400M406.300 2324V2400M466 2324V2400" style="stroke-opacity:.8"/>
<path d="M119.600 2353.800H478.600" stroke="#6ed0d0" stroke-width="1.800"/>
<g class="ya"><text x="114.300" y="2327.300">2.50</text><text x="114.300" y="2357.300">2</text><text x="114.300" y="2387.300">1.50</text></g>
<!-- R8 P2 -->
<path class="g" d="M576 2324.300H918.800M576 2362.300H918.800M576 2399.800H918.800M620.500 2324V2400M676.800 2324V2400M733.900 2324V2400M792 2324V2400M849 2324V2400M906.300 2324V2400"/>
<g transform="translate(0,2220) scale(.89286,.33333)"><path fill="#7eb26d" d="M643 540 645 387 647 540zM661 540 663 387 666 540zM690 540 692 387 695 540zM738 540 741 387 749 387 752 540zM761 540 763 387 766 540zM790 540 792 387 795 540zM840 540 843 387 851 387 854 540zM860 540 862 387 865 540zM890 540 893 337 897 400 899 540zM943 540 946 387 954 387 957 540zM960 540 962 387 965 540zM992 540 994 387 997 540z"/></g>
<g class="ya"><text x="568.800" y="2327.300">0.0200</text><text x="568.800" y="2365.300">0.0150</text><text x="568.800" y="2403.300">0.0100</text></g>
<!-- R8 P3 -->
<path class="g" d="M1009.800 2324.300H1358M1009.800 2354.300H1358M1009.800 2384.300H1358M1054.500 2324V2400M1112.500 2324V2400M1171.400 2324V2400M1229.500 2324V2400M1287.500 2324V2400M1345.500 2324V2400"/>
<path d="M1141 2400 1142 2357Q1143 2353 1144 2357L1145 2400" fill="#73bf69" fill-opacity=".15" stroke="#7eb26d" stroke-width="1"/>
<path d="M1141.200 2400 1142.300 2384.300H1143.700L1144.800 2400z" fill="#eab839"/>
<g class="ya"><text x="1003.600" y="2327.300">250 ms</text><text x="1003.600" y="2357.300">200 ms</text><text x="1003.600" y="2387.300">150 ms</text></g>
</svg>
</div>
</body></html>
